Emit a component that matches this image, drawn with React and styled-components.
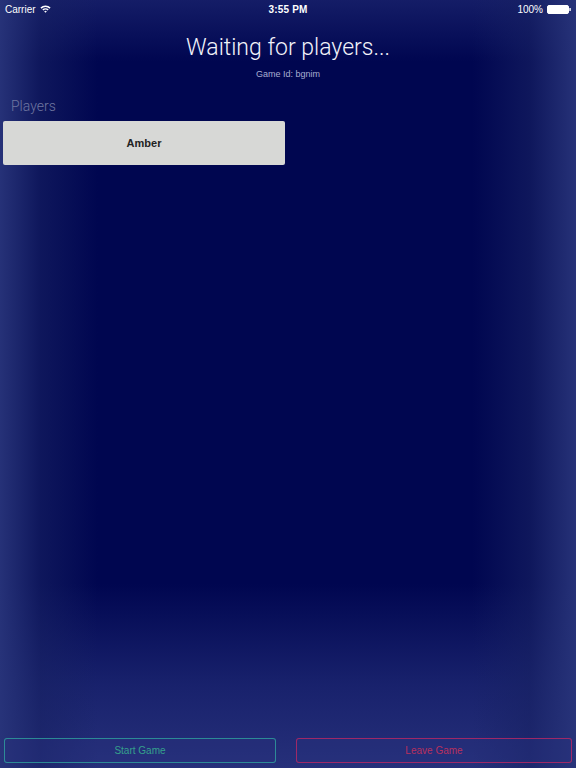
import React from "react";
import styled, { createGlobalStyle } from "styled-components";

const Global = createGlobalStyle`
  html, body {
    margin: 0;
    padding: 0;
    height: 100%;
  }
  body {
    font-family: "Liberation Sans", Arial, sans-serif;
    background: #000650;
  }
  #root {
    min-height: 100%;
  }
`;

const Screen = styled.div`
  width: 576px;
  height: 768px;
  display: flex;
  flex-direction: column;
  overflow: hidden;
  background:
    linear-gradient(
      to right,
      rgba(40, 52, 122, 0.95) 0%,
      rgba(24, 34, 100, 0.6) 7%,
      rgba(0, 6, 80, 0) 17%,
      rgba(0, 6, 80, 0) 82%,
      rgba(24, 34, 100, 0.6) 92%,
      rgba(40, 52, 122, 0.95) 100%
    ),
    linear-gradient(
      to bottom,
      rgba(34, 44, 118, 0.6) 0%,
      rgba(0, 6, 80, 0) 8%,
      rgba(0, 6, 80, 0) 76%,
      rgba(30, 40, 115, 0.8) 89%,
      rgba(38, 48, 122, 1) 100%
    ),
    #000650;
`;

const StatusBar = styled.div`
  height: 18px;
  display: grid;
  grid-template-columns: 1fr auto 1fr;
  align-items: center;
  padding: 0 5px;
  color: #fff;
  font-size: 10px;
`;

const StatusSide = styled.div`
  display: flex;
  align-items: center;
  gap: 4px;
  justify-content: ${(p) => (p.$right ? "flex-end" : "flex-start")};
`;

const Clock = styled.div`
  font-weight: 700;
  letter-spacing: 0.2px;
`;

const Header = styled.header`
  display: flex;
  flex-direction: column;
  align-items: center;
  padding-top: 16px;
`;

const Title = styled.h1`
  margin: 0;
  font-family: Roboto, "Liberation Sans", sans-serif;
  font-weight: 300;
  font-size: 23px;
  line-height: 28px;
  color: #f2f3fa;
`;

const GameId = styled.div`
  margin-top: 7px;
  font-size: 9px;
  color: #a9aed0;
`;

const Section = styled.section`
  padding: 19px 3px 0;
`;

const SectionLabel = styled.div`
  padding-left: 8px;
  font-family: Roboto, "Liberation Sans", sans-serif;
  font-weight: 300;
  font-size: 14px;
  line-height: 16px;
  color: #6f76a0;
  margin-bottom: 7px;
`;

const PlayerCard = styled.div`
  width: 282px;
  height: 44px;
  display: flex;
  align-items: center;
  justify-content: center;
  background: #d7d8d6;
  border-radius: 2px;
  font-size: 11px;
  font-weight: 700;
  color: #222;
`;

const Spacer = styled.div`
  flex: 1;
`;

const Footer = styled.footer`
  display: grid;
  grid-template-columns: 272px 276px;
  gap: 20px;
  padding: 0 4px 5px;
`;

const ActionButton = styled.button`
  height: 25px;
  background: rgba(40, 50, 125, 0.35);
  border: 1px solid ${(p) => p.$border};
  border-radius: 3px;
  color: ${(p) => p.$color};
  font-family: "Liberation Sans", Arial, sans-serif;
  font-size: 10px;
  cursor: pointer;
`;

const Wifi = () => (
  <svg width="11" height="8" viewBox="0 0 11 8">
    <path d="M0.4 2.6 A7.4 7.4 0 0 1 10.6 2.6 L9.5 3.7 A5.8 5.8 0 0 0 1.5 3.7 Z" fill="#fff" />
    <path d="M2.3 4.5 A4.6 4.6 0 0 1 8.7 4.5 L7.6 5.6 A3 3 0 0 0 3.4 5.6 Z" fill="#fff" />
    <path d="M4.2 6.4 A1.9 1.9 0 0 1 6.8 6.4 L5.5 7.8 Z" fill="#fff" />
  </svg>
);

const Battery = () => (
  <svg width="24" height="9" viewBox="0 0 24 9">
    <rect x="0.5" y="0.5" width="21" height="8" rx="1.5" fill="#fff" stroke="#fff" />
    <rect x="22.3" y="3" width="1.5" height="3" rx="0.5" fill="#fff" />
  </svg>
);

export default function App() {
  return (
    <>
      <Global />
      <Screen>
        <StatusBar>
          <StatusSide>
            <span>Carrier</span>
            <Wifi />
          </StatusSide>
          <Clock>3:55 PM</Clock>
          <StatusSide $right>
            <span>100%</span>
            <Battery />
          </StatusSide>
        </StatusBar>

        <Header>
          <Title>Waiting for players...</Title>
          <GameId>Game Id: bgnim</GameId>
        </Header>

        <Section>
          <SectionLabel>Players</SectionLabel>
          <PlayerCard>Amber</PlayerCard>
        </Section>

        <Spacer />

        <Footer>
          <ActionButton $border="rgba(48, 170, 160, 0.75)" $color="#35a08c">
            Start Game
          </ActionButton>
          <ActionButton $border="rgba(190, 40, 100, 0.8)" $color="#b8305e">
            Leave Game
          </ActionButton>
        </Footer>
      </Screen>
    </>
  );
}
